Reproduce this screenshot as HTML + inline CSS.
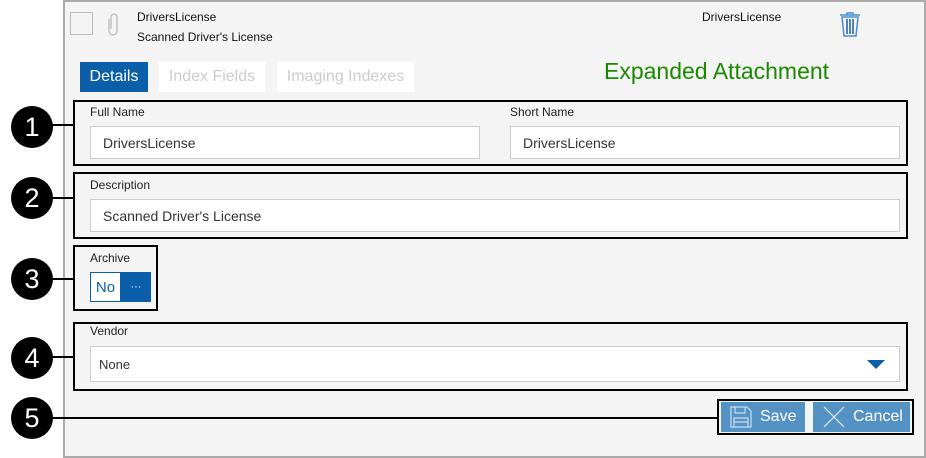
<!DOCTYPE html><html><head><style>
body{margin:0;width:926px;height:458px;background:#fff;position:relative;font-family:"Liberation Sans",Arial,sans-serif;overflow:hidden}
.a{position:absolute}
.panel{left:63px;top:0;width:859px;height:454px;background:#f4f4f4;border:2px solid #aaa;border-top:2px solid #aaa;box-sizing:content-box}
.box{border:2px solid #000;box-sizing:border-box}
.inp{background:#fff;border:1px solid #ccc;box-sizing:border-box;font-size:14px;color:#333;padding-left:12px;display:flex;align-items:center}
.lbl{font-size:12px;color:#222}
.c{width:42px;height:42px;border-radius:50%;background:#000;color:#fff;font-size:27px;display:flex;align-items:center;justify-content:center;left:11px}
.ln{height:2px;background:#000}
.tab{top:62px;height:30px;font-size:16px;display:flex;align-items:center;justify-content:center;background:#fff;color:#ccc}
</style></head><body>
<div class="a panel"></div>
<div class="a" style="left:70px;top:12px;width:23px;height:23px;border:1px solid #bbb;box-sizing:border-box"></div>
<svg class="a" style="left:106px;top:11px" width="14" height="26"><path d="M3 8 V20 a4 4 0 0 0 8 0 V6 a3 3 0 0 0 -6 0 V18" fill="none" stroke="#bbb" stroke-width="1.3"/></svg>
<div class="a" style="left:137px;top:10px;font-size:12px;color:#111">DriversLicense</div>
<div class="a" style="left:137px;top:30px;font-size:12px;color:#111">Scanned Driver's License</div>
<div class="a" style="left:702px;top:10px;font-size:12px;color:#111">DriversLicense</div>
<svg class="a" style="left:838px;top:11px" width="24" height="27"><path d="M2 4 H22 M9 4 V2 H15 V4" fill="none" stroke="#4a8ed0" stroke-width="1.5"/><path d="M4 6 L6 25 H18 L20 6 Z" fill="none" stroke="#4a8ed0" stroke-width="1.5"/><path d="M9 8 V23 M12 8 V23 M15 8 V23" stroke="#1a5fa8" stroke-width="1.5"/></svg>
<div class="a tab" style="left:80px;width:68px;background:#0b5ea8;color:#fff">Details</div>
<div class="a tab" style="left:159px;width:106px">Index Fields</div>
<div class="a tab" style="left:277px;width:137px">Imaging Indexes</div>
<div class="a" style="left:604px;top:58px;font-size:23px;color:#1a8a00">Expanded Attachment</div>

<div class="a box" style="left:73px;top:100px;width:835px;height:66px"></div>
<div class="a lbl" style="left:90px;top:105px">Full Name</div>
<div class="a inp" style="left:90px;top:126px;width:390px;height:33px">DriversLicense</div>
<div class="a lbl" style="left:510px;top:105px">Short Name</div>
<div class="a inp" style="left:510px;top:126px;width:390px;height:33px">DriversLicense</div>

<div class="a box" style="left:73px;top:172px;width:835px;height:67px"></div>
<div class="a lbl" style="left:90px;top:178px">Description</div>
<div class="a inp" style="left:90px;top:199px;width:810px;height:33px">Scanned Driver's License</div>

<div class="a box" style="left:73px;top:245px;width:85px;height:66px"></div>
<div class="a lbl" style="left:90px;top:251px">Archive</div>
<div class="a" style="left:90px;top:272px;width:31px;height:30px;border:1px solid #0b5ea8;box-sizing:border-box;background:#fff;color:#0b5ea8;font-size:15px;display:flex;align-items:center;justify-content:center">No</div>
<div class="a" style="left:121px;top:272px;width:30px;height:30px;background:#0b5ea8;color:#fff;font-size:11px;display:flex;align-items:center;justify-content:center">···</div>

<div class="a box" style="left:73px;top:322px;width:835px;height:69px"></div>
<div class="a lbl" style="left:90px;top:324px">Vendor</div>
<div class="a inp" style="left:90px;top:346px;width:810px;height:36px;padding-left:8px;font-size:13px">None</div>
<svg class="a" style="left:867px;top:360px" width="18" height="9"><path d="M0 0 H18 L9 9 Z" fill="#0b5ea8"/></svg>

<div class="a box" style="left:717px;top:399px;width:197px;height:36px"></div>
<div class="a" style="left:721px;top:402px;width:84px;height:30px;background:#5592c4;color:#fff;font-size:16px;display:flex;align-items:center"><svg style="margin:0 8px 0 9px" width="22" height="22"><path d="M1 1 H17 L21 5 V21 H1 Z M5 1 V7 H15 V1 M4 21 V12 H18 V21 M4 16 H18" fill="none" stroke="#c8dcee" stroke-width="1.2"/></svg>Save</div>
<div class="a" style="left:813px;top:402px;width:97px;height:30px;background:#5592c4;color:#fff;font-size:16px;display:flex;align-items:center"><svg style="margin:0 8px 0 10px" width="22" height="22"><path d="M1 1 L21 21 M21 1 L1 21" stroke="#e6eef6" stroke-width="1.2"/></svg>Cancel</div>

<div class="a c" style="top:106px">1</div><div class="a ln" style="left:50px;top:124px;width:24px"></div>
<div class="a c" style="top:177px">2</div><div class="a ln" style="left:50px;top:197px;width:24px"></div>
<div class="a c" style="top:258px">3</div><div class="a ln" style="left:50px;top:278px;width:24px"></div>
<div class="a c" style="top:337px">4</div><div class="a ln" style="left:50px;top:356px;width:24px"></div>
<div class="a c" style="top:397px">5</div><div class="a ln" style="left:50px;top:417px;width:668px"></div>
</body></html>
